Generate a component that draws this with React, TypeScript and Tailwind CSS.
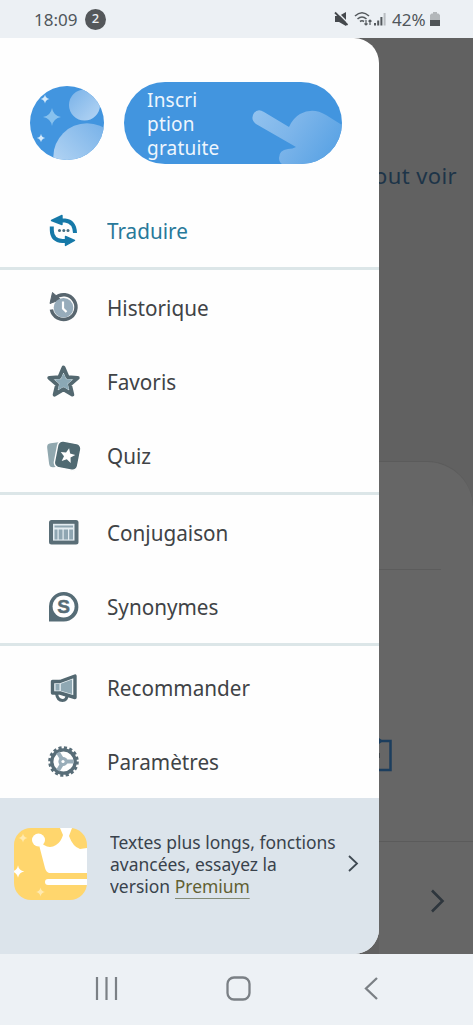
import type { ReactNode } from 'react';

type Item = { label: string; icon: ReactNode; active?: boolean };

const STAR = 'M0 -10 L2.7 -3.6 L9.5 -3.1 L4.3 1.4 L5.9 8.1 L0 4.5 L-5.9 8.1 L-4.3 1.4 L-9.5 -3.1 L-2.7 -3.6Z';
const SPARK = 'M0 -9 Q1.3 -1.3 9 0 Q1.3 1.3 0 9 Q-1.3 1.3 -9 0 Q-1.3 -1.3 0 -9Z';

const icon = 'h-9 w-9 shrink-0';

const TranslateIcon = () => (
  <svg viewBox="0 0 36 36" className={icon} fill="none">
    <path d="M12 8.500H20Q29.500 9.500 30 21" stroke="#1679a8" strokeWidth="4" />
    <path d="M25 29H17.500Q7 28.500 6.800 18V14.500" stroke="#1679a8" strokeWidth="4" />
    <path d="M6.500 8.500 17 3.500V12.500Z" fill="#1679a8" stroke="#1679a8" strokeWidth="1.400" strokeLinejoin="round" />
    <path d="M29.500 28.500 20.500 33.500V24.500Z" fill="#1679a8" stroke="#1679a8" strokeWidth="1.400" strokeLinejoin="round" />
    <g fill="#456e80">
      <circle cx="14.500" cy="18.500" r="1.500" />
      <circle cx="18.800" cy="18.500" r="1.500" />
      <circle cx="23" cy="18.500" r="1.500" />
    </g>
  </svg>
);

const HistoryIcon = () => (
  <svg viewBox="0 0 36 36" className={icon} fill="none">
    <path d="M10 9.200A12.400 12.400 0 1 1 6.400 20.500" stroke="#58666f" strokeWidth="3.500" />
    <path d="M7.500 3.500 15.500 10.500 5 14.500Z" fill="#58666f" stroke="#58666f" strokeLinejoin="round" />
    <circle cx="18.500" cy="18.800" r="9.800" fill="#97acbb" />
    <path d="M18 12.500V19.500L21.500 23" stroke="#fff" strokeWidth="2.200" />
  </svg>
);

const StarIcon = () => (
  <svg viewBox="0 0 36 36" className={icon}>
    <path d={STAR} transform="translate(18.500 19.500) scale(1.500)" fill="#e9f1f4" stroke="#536870" strokeWidth="2.600" strokeLinejoin="round" />
    <path d={STAR} transform="translate(18.500 19.500) scale(.800)" fill="#8ba8b5" stroke="#8ba8b5" strokeWidth="1.500" strokeLinejoin="round" />
  </svg>
);

const QuizIcon = () => (
  <svg viewBox="0 0 36 36" className={icon}>
    <rect x="3" y="5.500" width="20" height="24" rx="4" fill="#91a8af" transform="rotate(-7 13 17)" />
    <rect x="11" y="5" width="23.500" height="27" rx="5" fill="#506a72" stroke="#fff" strokeWidth="1.400" transform="rotate(11 22 18)" />
    <path d={STAR} transform="translate(22.500 18.800) rotate(12) scale(.780)" fill="#fff" />
  </svg>
);

const TableIcon = () => (
  <svg viewBox="0 0 36 36" className={icon}>
    <rect x="4" y="6" width="29.500" height="24.500" rx="2.500" fill="#5a6e77" />
    <rect x="8" y="9.800" width="21.500" height="16.800" fill="#e3ecf1" />
    <path d="M9.500 11.500H28V13.500H9.500ZM9.500 15.500H12.500V25.500H9.500ZM13.700 15.500H17.500V25.500H13.700ZM18.700 15.500H23V25.500H18.700ZM24.200 15.500H28V25.500H24.200Z" fill="#8fa6b2" />
  </svg>
);

const SynonymIcon = () => (
  <svg viewBox="0 0 36 36" className={icon}>
    <path d="M4 33.500V18.300A14.700 14.700 0 1 1 18.700 33.500Z" fill="#566c76" />
    <circle cx="18.600" cy="18.500" r="11" fill="#fff" />
    <text x="18.500" y="25.200" textAnchor="middle" fontSize="19" fontWeight="700" fill="#566c76" stroke="#566c76" strokeWidth=".5" fontFamily="Liberation Sans, sans-serif">S</text>
  </svg>
);

const MegaphoneIcon = () => (
  <svg viewBox="0 0 36 36" className={icon} fill="none">
    <path d="M11.500 24.500Q12.500 31.500 17.500 31.500Q22 31.500 22 26" stroke="#536871" strokeWidth="3" />
    <path d="M7.500 12.500H15L30 7V28.500L15 24H7.500Z" fill="#e9f1f4" stroke="#536871" strokeWidth="3.400" strokeLinejoin="round" />
    <path d="M10.500 15H14.500V21.500H10.500ZM15.800 14.700 27 10.500V25L15.800 21.800Z" fill="#8fa8b3" />
  </svg>
);

const GearIcon = () => (
  <svg viewBox="0 0 36 36" className={icon} fill="none">
    <circle cx="18.500" cy="18.500" r="13.800" stroke="#586d78" strokeWidth="3" strokeDasharray="3.100 2.319" />
    <circle cx="18.500" cy="18.500" r="11.700" stroke="#586d78" strokeWidth="3.300" />
    <path d="M18.500 18.500 13 9.500M18.500 18.500H28.500M18.500 18.500 13 27.500" stroke="#99adb9" strokeWidth="4" />
    <circle cx="18" cy="18.500" r="4.600" fill="#99adb9" />
    <circle cx="18" cy="18.500" r="1.600" fill="#fff" />
  </svg>
);

const groups: { className: string; items: Item[] }[] = [
  {
    className: 'border-b-[3px] border-[#dce6e8]',
    items: [{ label: 'Traduire', icon: <TranslateIcon />, active: true }],
  },
  {
    className: 'border-b-[3px] border-[#dce6e8]',
    items: [
      { label: 'Historique', icon: <HistoryIcon /> },
      { label: 'Favoris', icon: <StarIcon /> },
      { label: 'Quiz', icon: <QuizIcon /> },
    ],
  },
  {
    className: 'border-b-[3px] border-[#dce6e8]',
    items: [
      { label: 'Conjugaison', icon: <TableIcon /> },
      { label: 'Synonymes', icon: <SynonymIcon /> },
    ],
  },
  {
    className: 'pt-1',
    items: [
      { label: 'Recommander', icon: <MegaphoneIcon /> },
      { label: 'Paramètres', icon: <GearIcon /> },
    ],
  },
];

function StatusBar() {
  return (
    <header className="flex h-[38px] shrink-0 items-center bg-[#ecf0f4] pl-[34px] pr-[33px] text-[17px] text-[#50565b]">
      <span className="w-[43px] whitespace-nowrap pt-0.5">18:09</span>
      <span className="ml-[8px] flex size-[21px] items-center justify-center rounded-full bg-[#54575a] text-[13px] font-medium text-[#eef1f4]">2</span>
      <div className="ml-auto flex items-center">
        <svg viewBox="0 0 16 16" className="mr-1 h-4 w-4" fill="#45494d">
          <path d="M1 5H5L12 1V15L5 11H1Z" />
          <path d="M2 0 15 13" stroke="#ecf0f4" strokeWidth="1.500" />
          <path d="M1 1.500 13.500 14" stroke="#45494d" strokeWidth="1.800" />
        </svg>
        <svg viewBox="0 0 20 16" className="h-4 w-5" fill="none" stroke="#555a5e" strokeWidth="1.600">
          <path d="M1 5Q8 -1.500 15 5M3.500 8Q8 4 12.500 8M6 10.500Q8 9 10 10.500" />
          <path d="M12 9V14M10.500 12.500 12 14 13.500 12.500M16 14V9M14.500 10.500 16 9 17.500 10.500" strokeWidth="1.200" />
        </svg>
        <svg viewBox="0 0 13 14" className="mr-[5px] h-3.5 w-[13px]" fill="#54595d">
          <path d="M0 11H2V13.500H0ZM3.200 8.500H5.200V13.500H3.200ZM6.400 5H8.400V13.500H6.400Z" />
          <path d="M9.600 1H11.600V13.500H9.600Z" fill="#b9bdc1" />
        </svg>
        <span className="w-[35px] whitespace-nowrap pt-0.5">42%</span>
        <svg viewBox="0 0 10 14" className="ml-[3px] h-3.5 w-2.5">
          <path d="M3 0H7V1.500H8.500L10 3V8H0V3L1.500 1.500H3Z" fill="#b3b7ba" />
          <path d="M0 8H10V14H0Z" fill="#4f5457" />
        </svg>
      </div>
    </header>
  );
}

function Avatar() {
  return (
    <svg viewBox="0 0 74 74" className="size-[74px] shrink-0">
      <defs>
        <clipPath id="avatar"><circle cx="37" cy="37" r="37" /></clipPath>
        <linearGradient id="body" x1="0" y1="1" x2="1" y2="0">
          <stop offset=".15" stopColor="#b8d7f4" />
          <stop offset=".9" stopColor="#75b0e8" />
        </linearGradient>
        <linearGradient id="head" x1="0" y1="0" x2="1" y2="1">
          <stop stopColor="#79b2e8" />
          <stop offset="1" stopColor="#b5d5f4" />
        </linearGradient>
      </defs>
      <g clipPath="url(#avatar)">
        <rect width="74" height="74" fill="#4295df" />
        <circle cx="54.500" cy="19" r="15.500" fill="url(#head)" />
        <circle cx="57" cy="71" r="33.700" fill="url(#body)" />
      </g>
      <path d={SPARK} transform="translate(22 31)" fill="#87c1ee" />
      <path d={SPARK} transform="translate(15 13) scale(.500)" fill="#d3e9fb" />
      <path d={SPARK} transform="translate(11 52) scale(.480)" fill="#d3e9fb" />
    </svg>
  );
}

function SignUpButton() {
  return (
    <button className="relative h-[82px] w-[218px] overflow-hidden rounded-full bg-[#4295df] pl-[23px] pt-0.5 text-left text-[19px] leading-6 text-[#eef6fd]">
      <svg viewBox="0 0 90 56" className="absolute bottom-0 right-0 h-14 w-[90px]">
        <defs>
          <linearGradient id="hand" x1="0" y1="0" x2="1" y2="0.400">
            <stop stopColor="#93c3ef" />
            <stop offset=".5" stopColor="#7db5ea" />
            <stop offset="1" stopColor="#5ea5e5" />
          </linearGradient>
        </defs>
        <path
          d="M12 4Q6 0 2 5Q-2 11 4 16L44 39Q41 41 36 41Q27 42 27 50Q27 54 30 56H90V17L74 7Q61 -1 48 6Q41 10 37 19Z"
          fill="url(#hand)"
        />
      </svg>
      <span className="relative block w-[76px] tracking-[0.2px]">
        Inscri
        <br />
        ption
        <br />
        gratuite
      </span>
    </button>
  );
}

function MenuRow({ label, icon, active }: Item) {
  return (
    <a className={`flex h-[74px] items-center pl-[45px] text-[22px] ${active ? 'text-[#28799a]' : 'text-[#404346]'}`}>
      {icon}
      <span className="ml-[26px] origin-left scale-x-[0.94]">{label}</span>
    </a>
  );
}

function PremiumBanner() {
  return (
    <div className="flex flex-1 items-start bg-[#dce4eb] pl-[14px] pt-[30px] text-[#39424c]">
      <svg viewBox="0 0 73 72" className="h-[72px] w-[73px] shrink-0">
        <rect width="73" height="72" rx="17" fill="#ffd66d" />
        <path d="M24 13 30 17Q36 21 42 17Q47 14 49 7L46 0H58L55 8Q59 19 66 21L73 20V45H35Q32 44 31 40Z" fill="#fff" />
        <circle cx="24.500" cy="12" r="6.500" fill="#fff" />
        <path d="M73 51H34A3 3 0 0 0 34 57H73Z" fill="#fff" />
        <path d={SPARK} transform="translate(9 10) scale(.500)" fill="#ffeab1" />
        <path d={SPARK} transform="translate(4 43.500) scale(.700)" fill="#fff" />
        <path d={SPARK} transform="translate(26.500 64) scale(.500)" fill="#ffeab1" />
      </svg>
      <p className="ml-[23px] mt-[3px] w-[232px] origin-left scale-x-[0.97] whitespace-nowrap text-[18px] leading-[22px]">
        Textes plus longs, fonctions
        <br />
        avancées, essayez la
        <br />
        version <span className="border-b border-[#838b76] text-[#615f32]">Premium</span>
      </p>
      <svg viewBox="0 0 11 17" className="ml-1.5 mt-[27px] h-[17px] w-[11px] shrink-0" fill="none" stroke="#3f4952" strokeWidth="1.800">
        <path d="m1 1 8 7.500L1 16" />
      </svg>
    </div>
  );
}

// Dimmed page that shows to the right of the open drawer
function Backdrop() {
  return (
    <div className="flex min-w-0 flex-1 flex-col bg-[#616161]">
      <div className="flex h-[423px] justify-end pr-4 pt-[121px] text-[22px] text-[#1d3448]">
        <span className="whitespace-nowrap tracking-[0.4px]">Tout voir</span>
      </div>
      <div className="flex-1 rounded-tr-[46px] border-t border-[#5b5b5b] bg-[#666]">
        <div className="mr-8 h-[108px] border-b border-[#5c5c5c]" />
        <div className="h-[272px] border-b border-[#5b5b5b] pt-[168px]">
          <svg viewBox="0 0 14 34" className="h-[34px] w-[14px]" fill="none" stroke="#1c3e5e" strokeWidth="2.500">
            <path d="M0 3H11.500V32H0" />
            <path d="M0 0 4 3 0 6Z" fill="#1c3e5e" stroke="none" />
            <path d="M0 15V20" stroke="#41464a" strokeWidth="2" />
          </svg>
        </div>
        <svg viewBox="0 0 14 24" className="ml-[52px] mt-[47px] h-6 w-3.5" fill="none" stroke="#2e363d" strokeWidth="2.600">
          <path d="m1 1.500 10.500 10.500L1 22.500" />
        </svg>
      </div>
    </div>
  );
}

function NavBar() {
  return (
    <nav className="flex h-[71px] shrink-0 items-center bg-[#edf1f5] pb-[3px] pl-[95px]">
      <svg viewBox="0 0 23 23" className="size-[23px]" stroke="#7b8085" strokeWidth="2.200">
        <path d="M2 0V23M11.500 0V23M21 0V23" />
      </svg>
      <svg viewBox="0 0 25 25" className="ml-[108px] size-[25px]" fill="none" stroke="#7b8085" strokeWidth="2.300">
        <rect x="1.500" y="1.500" width="22" height="22" rx="6.500" />
      </svg>
      <svg viewBox="0 0 14 23" className="ml-[113px] h-[23px] w-3.5" fill="none" stroke="#7b8085" strokeWidth="2.300">
        <path d="M13 1 2 11.500 13 22" />
      </svg>
    </nav>
  );
}

export default function App() {
  return (
    <div className="flex h-[1025px] w-[473px] flex-col overflow-hidden font-['Noto_Sans',sans-serif]">
      <StatusBar />
      <main className="flex min-h-0 flex-1 bg-[#616161]">
        <aside className="z-10 flex w-[379px] shrink-0 flex-col overflow-hidden rounded-r-[25px] bg-[#fefefe]">
          <div className="flex h-[155px] shrink-0 items-start gap-5 pl-[30px] pt-11">
            <div className="pt-1"><Avatar /></div>
            <SignUpButton />
          </div>
          {groups.map((group) => (
            <div key={group.items[0].label} className={group.className}>
              {group.items.map((item) => (
                <MenuRow key={item.label} {...item} />
              ))}
            </div>
          ))}
          <PremiumBanner />
        </aside>
        <Backdrop />
      </main>
      <NavBar />
    </div>
  );
}
